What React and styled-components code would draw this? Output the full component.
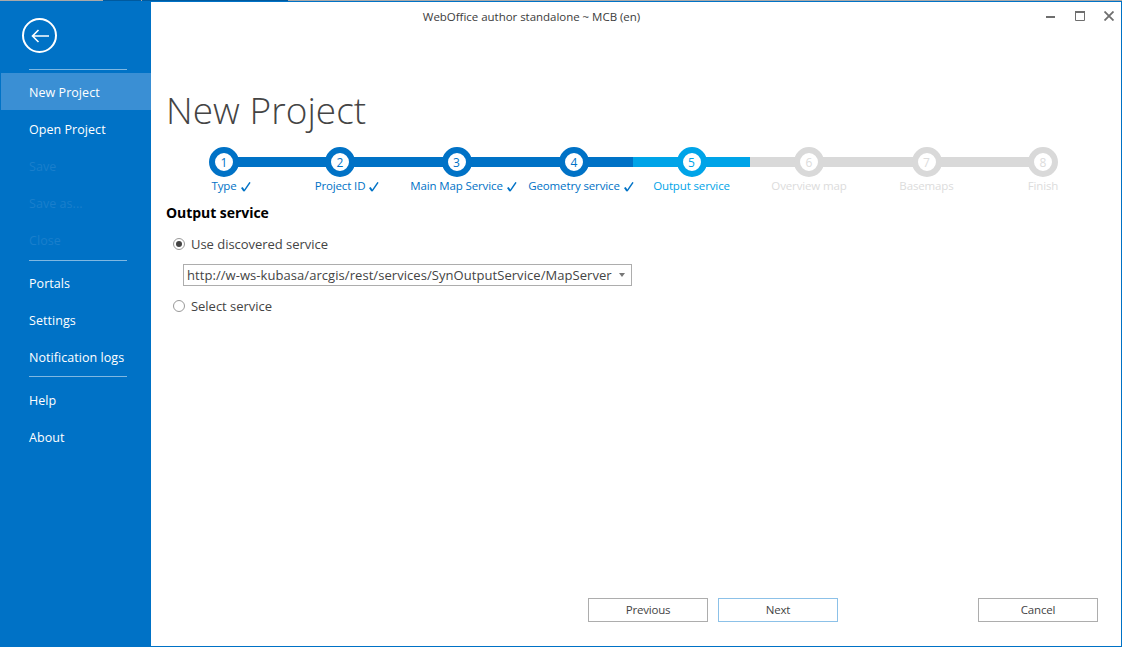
import React from 'react';
import styled, { createGlobalStyle } from 'styled-components';

const GlobalStyle = createGlobalStyle`
  html, body {
    margin: 0;
    padding: 0;
    background: #fff;
  }
  body {
    font-family: "Open Sans", "Liberation Sans", sans-serif;
    font-size: 12px;
  }
`;

const TopStrip = styled.div`
  display: flex;
  width: 1122px;
  height: 1px;
  background: #a9a9a9;
`;

const StripPiece = styled.div`
  flex: none;
  width: ${p => p.$width}px;
  margin-left: ${p => p.$gap}px;
  background: #005a9e;
`;

const Window = styled.div`
  display: flex;
  box-sizing: border-box;
  width: 1122px;
  height: 646px;
  border: 1px solid #0072c6;
  overflow: hidden;
`;

const Sidebar = styled.nav`
  display: flex;
  flex-direction: column;
  flex: none;
  width: 150px;
  background: #0072c6;
  padding-top: 16px;
`;

const BackButton = styled.div`
  display: flex;
  align-items: center;
  justify-content: center;
  box-sizing: border-box;
  width: 35px;
  height: 35px;
  margin-left: 21px;
  border: 2px solid #fff;
  border-radius: 50%;
  color: #fff;
`;

const Separator = styled.div`
  height: 1px;
  width: 98px;
  margin: ${p => p.$margin};
  background: #7fb8e2;
`;

const MenuItem = styled.div`
  display: flex;
  align-items: center;
  box-sizing: border-box;
  height: 37px;
  padding: 2px 0 0 28px;
  font-size: 12.5px;
  letter-spacing: 0.05px;
  color: ${p => (p.$disabled ? '#1a7fcc' : '#fff')};
  background: ${p => (p.$active ? '#3a8fd4' : 'transparent')};
`;

const Main = styled.main`
  display: flex;
  flex-direction: column;
  flex: auto;
  min-width: 0;
`;

const TitleBar = styled.header`
  display: flex;
  align-items: center;
  height: 29px;
`;

const WindowTitle = styled.div`
  flex: auto;
  text-align: center;
  font-size: 11.5px;
  letter-spacing: -0.03px;
  color: #3c3c3c;
  padding-right: 134px;
`;

const WindowButtons = styled.div`
  display: flex;
  align-items: center;
  flex: none;
  gap: 19px;
  padding: 0 7px 2px 0;
  color: #6e6e6e;
`;

const PageTitle = styled.h1`
  margin: 53px 0 0 15px;
  font-weight: 300;
  font-size: 37px;
  line-height: 52px;
  letter-spacing: 0.05px;
  color: #444;
`;

const Stepper = styled.div`
  display: flex;
  margin: 11px 0 0 15px;
`;

const Step = styled.div`
  display: flex;
  flex-direction: column;
  align-items: center;
  flex: none;
  position: relative;
  width: ${p => p.$width}px;
  --step-color: ${p => p.$color};
  &::before {
    content: '';
    position: absolute;
    top: 10px;
    height: 10px;
    left: ${p => (p.$first ? '50%' : '0')};
    right: ${p => (p.$last ? '50%' : '0')};
    background: var(--step-color);
  }
`;

const Circle = styled.div`
  display: flex;
  align-items: center;
  justify-content: center;
  position: relative;
  box-sizing: border-box;
  width: 30px;
  height: 30px;
  border: 6px solid var(--step-color);
  border-radius: 50%;
  background: #fff;
  font-size: 12px;
  font-weight: 500;
  color: ${p => p.$text};
`;

const StepLabel = styled.div`
  position: relative;
  margin-top: 2px;
  font-size: 11.5px;
  line-height: 14px;
  letter-spacing: -0.13px;
  white-space: nowrap;
  color: ${p => p.$text};
`;

const Tick = styled.svg`
  position: absolute;
  left: 100%;
  top: 3px;
  margin-left: 4px;
`;

const Section = styled.section`
  padding-left: 15px;
`;

const SectionTitle = styled.h2`
  margin: 11px 0 0;
  font-size: 14px;
  line-height: 18px;
  font-weight: 700;
  letter-spacing: -0.05px;
  color: #000;
`;

const RadioRow = styled.label`
  display: flex;
  align-items: center;
  height: 18px;
  margin: ${p => p.$margin};
  padding-left: 7px;
  font-size: 13px;
  letter-spacing: -0.03px;
  color: #444;
`;

const RadioMark = styled.span`
  display: flex;
  align-items: center;
  justify-content: center;
  box-sizing: border-box;
  width: 12px;
  height: 12px;
  margin-right: 6px;
  border: 1px solid #999;
  border-radius: 50%;
  background: #fff;
  &::after {
    content: '';
    display: ${p => (p.$checked ? 'block' : 'none')};
    width: 6px;
    height: 6px;
    border-radius: 50%;
    background: #444;
  }
`;

const Select = styled.div`
  display: flex;
  align-items: center;
  justify-content: space-between;
  box-sizing: border-box;
  width: 449px;
  height: 22px;
  margin: 11px 0 0 17px;
  padding: 0 6px 0 3px;
  border: 1px solid #adadad;
  font-size: 13px;
  letter-spacing: 0.06px;
  color: #444;
  white-space: nowrap;
`;

const Caret = styled.span`
  width: 0;
  height: 0;
  border-left: 3px solid transparent;
  border-right: 3px solid transparent;
  border-top: 4px solid #777;
`;

const Footer = styled.footer`
  display: flex;
  margin-top: auto;
  padding: 0 23px 24px 437px;
`;

const Button = styled.div`
  display: flex;
  align-items: center;
  justify-content: center;
  box-sizing: border-box;
  width: 120px;
  height: 24px;
  margin-left: ${p => p.$gap || 0}px;
  padding-bottom: 2px;
  border: 1px solid ${p => (p.$focused ? '#8cc1e8' : '#adadad')};
  font-size: 11.5px;
  letter-spacing: -0.2px;
  color: #444;
`;

const menuBlocks = [
  ['New Project', 'Open Project', 'Save', 'Save as...', 'Close'],
  ['Portals', 'Settings', 'Notification logs'],
  ['Help', 'About']
];
const disabledItems = ['Save', 'Save as...', 'Close'];

const steps = [
  { n: 1, label: 'Type', width: 116, state: 'done' },
  { n: 2, label: 'Project ID', width: 116, state: 'done' },
  { n: 3, label: 'Main Map Service', width: 117, state: 'done' },
  { n: 4, label: 'Geometry service', width: 118, state: 'done' },
  { n: 5, label: 'Output service', width: 117, state: 'current' },
  { n: 6, label: 'Overview map', width: 118, state: 'todo' },
  { n: 7, label: 'Basemaps', width: 117, state: 'todo' },
  { n: 8, label: 'Finish', width: 116, state: 'todo' }
];

const stepColors = {
  done: { bar: '#0072c6', text: '#0072c6' },
  current: { bar: '#00a4e8', text: '#00a4e8' },
  todo: { bar: '#d9d9d9', text: '#dcdcdc' }
};

function WindowControls() {
  return (
    <WindowButtons>
      <svg width="10" height="10" viewBox="0 0 10 10">
        <rect x="0" y="5" width="9" height="2" fill="currentColor" />
      </svg>
      <svg width="10" height="10" viewBox="0 0 10 10">
        <path d="M.5.5h9v9h-9z" fill="none" stroke="currentColor" />
        <rect x="0" y="0" width="10" height="2" fill="currentColor" />
      </svg>
      <svg width="10" height="10" viewBox="0 0 10 10">
        <path d="M.5.5l9 9M9.5.5l-9 9" fill="none" stroke="currentColor" strokeWidth="1.8" />
      </svg>
    </WindowButtons>
  );
}

export default function App() {
  return (
    <>
      <GlobalStyle />
      <TopStrip>
        <StripPiece $gap={103} $width={38} />
        <StripPiece $gap={1} $width={146} />
      </TopStrip>
      <Window>
        <Sidebar>
          <BackButton>
            <svg width="18" height="14" viewBox="0 0 18 14" fill="none" stroke="currentColor" strokeWidth="1.6">
              <path d="M18 7H1.5M7.5 1L1.5 7l6 6" />
            </svg>
          </BackButton>
          <Separator $margin="16px 0 3px 28px" />
          {menuBlocks.map((block, i) => (
            <React.Fragment key={block[0]}>
              {i > 0 && <Separator $margin={i === 1 ? '2px 0 3px 28px' : '1px 0 4px 28px'} />}
              {block.map(item => (
                <MenuItem key={item} $active={item === 'New Project'} $disabled={disabledItems.includes(item)}>
                  {item}
                </MenuItem>
              ))}
            </React.Fragment>
          ))}
        </Sidebar>
        <Main>
          <TitleBar>
            <WindowTitle>WebOffice author standalone ~ MCB (en)</WindowTitle>
            <WindowControls />
          </TitleBar>
          <PageTitle>New Project</PageTitle>
          <Stepper>
            {steps.map((s, i) => {
              const c = stepColors[s.state];
              return (
                <Step key={s.n} $width={s.width} $color={c.bar} $first={i === 0} $last={i === steps.length - 1}>
                  <Circle $text={c.text}>{s.n}</Circle>
                  <StepLabel $text={c.text}>
                    {s.label}
                    {s.state === 'done' && (
                      <Tick width="10" height="10" viewBox="0 0 10 10" fill="none" stroke="currentColor">
                        <path d="M.8 5.5L3.2 9" strokeWidth="2" />
                        <path d="M3 9.2L9 .3" strokeWidth="1.4" />
                      </Tick>
                    )}
                  </StepLabel>
                </Step>
              );
            })}
          </Stepper>
          <Section>
            <SectionTitle>Output service</SectionTitle>
            <RadioRow $margin="13px 0 0">
              <RadioMark $checked />
              Use discovered service
            </RadioRow>
            <Select>
              http://w-ws-kubasa/arcgis/rest/services/SynOutputService/MapServer
              <Caret />
            </Select>
            <RadioRow $margin="11px 0 0">
              <RadioMark />
              Select service
            </RadioRow>
          </Section>
          <Footer>
            <Button>Previous</Button>
            <Button $gap={10} $focused>Next</Button>
            <Button $gap={140}>Cancel</Button>
          </Footer>
        </Main>
      </Window>
    </>
  );
}
